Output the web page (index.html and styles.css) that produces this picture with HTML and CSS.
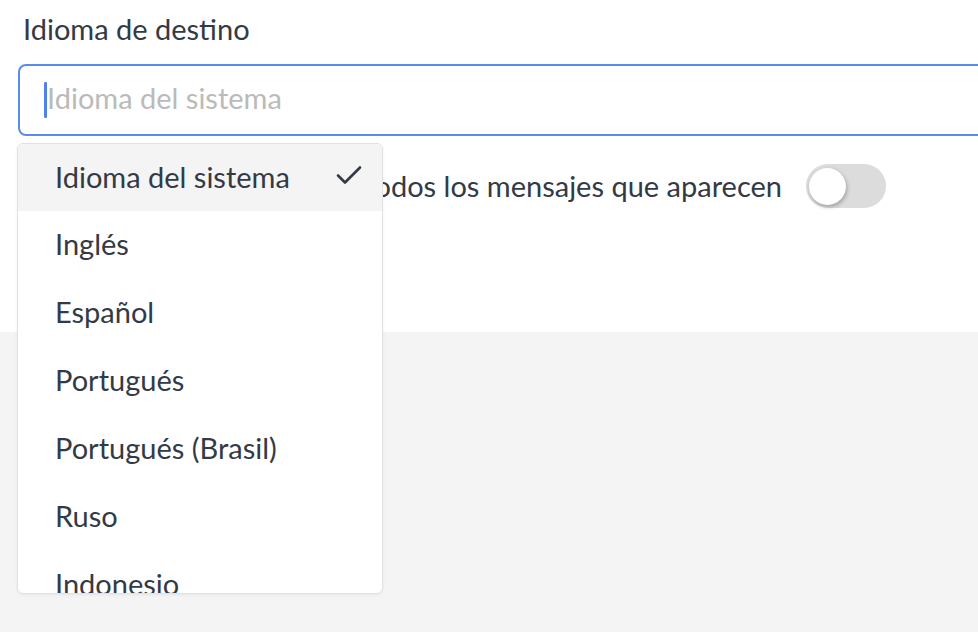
FILE: index.html
```html
<!DOCTYPE html>
<html lang="es">
<head>
<meta charset="utf-8">
<title>Idioma de destino</title>
<link rel="stylesheet" href="styles.css">
</head>
<body>
<div class="page">
  <section class="panel">
    <div class="field-label">Idioma de destino</div>
    <div class="select-input">
      <span class="caret"></span>
      <span class="placeholder">Idioma del sistema</span>
    </div>
    <div class="toggle-row">
      <span class="toggle-label">Traducir todos los mensajes que aparecen</span>
      <span class="toggle"><span class="knob"></span></span>
    </div>

    <ul class="dropdown">
      <li class="option selected">
        <span>Idioma del sistema</span>
        <svg class="check" width="26" height="20" viewBox="0 0 26 20"><path d="M2 10.5 L9 17.5 L24 2.5" fill="none" stroke="#333a45" stroke-width="2.6" stroke-linecap="round" stroke-linejoin="round"/></svg>
      </li>
      <li class="option">Inglés</li>
      <li class="option">Español</li>
      <li class="option">Portugués</li>
      <li class="option">Portugués (Brasil)</li>
      <li class="option">Ruso</li>
      <li class="option">Indonesio</li>
    </ul>
  </section>
  <section class="backdrop"></section>
</div>
</body>
</html>
```

FILE: styles.css
```css
* { box-sizing: border-box; }
html, body {
  margin: 0;
  padding: 0;
  background: #f4f4f4;
  font-family: Lato, "Noto Sans", sans-serif;
  color: #333a45;
  overflow: hidden;
}
.page {
  width: 978px;
  height: 632px;
  display: flex;
  flex-direction: column;
}
.panel {
  position: relative;
  background: #ffffff;
  height: 332px;
  padding: 11px 0 0 18px;
  overflow: visible;
  z-index: 1;
}
.field-label {
  font-size: 29px;
  line-height: 36px;
  padding-left: 5px;
}
.select-input {
  margin-top: 17px;
  width: 980px;
  height: 72px;
  border: 2px solid #5b8cec;
  border-radius: 8px;
  padding: 0 0 4px 24px;
  display: flex;
  align-items: center;
  font-size: 29px;
  line-height: 64px;
}
.caret {
  width: 3px;
  height: 36px;
  background: #4f82ee;
  border-radius: 1px;
  margin-top: 4px;
}
.placeholder {
  color: #bababa;
}
.toggle-row {
  margin-top: 27px;
  width: 868px;
  display: flex;
  justify-content: flex-end;
  align-items: center;
  gap: 24px;
  height: 45px;
}
.toggle-label {
  font-size: 29px;
  line-height: 36px;
  white-space: nowrap;
}
.toggle {
  position: relative;
  flex: none;
  width: 80px;
  height: 44px;
  border-radius: 22px;
  background: #dcdcdc;
}
.knob {
  position: absolute;
  left: 3px;
  top: 4px;
  width: 37px;
  height: 37px;
  border-radius: 50%;
  background: #ffffff;
  box-shadow: 1px 2px 4px rgba(0,0,0,0.28);
}
.dropdown {
  position: absolute;
  left: 17px;
  top: 143px;
  width: 366px;
  height: 451px;
  margin: 0;
  padding: 0;
  list-style: none;
  background: #ffffff;
  border: 1px solid #e2e2e2;
  border-radius: 6px;
  box-shadow: 0 1px 3px rgba(0,0,0,0.06);
  overflow: hidden;
}
.option {
  height: 68px;
  line-height: 66px;
  padding: 0 20px 2px 37px;
  font-size: 29px;
  white-space: nowrap;
  display: flex;
  align-items: center;
  justify-content: space-between;
}
.option.selected {
  background: #f4f4f4;
  height: 67px;
  padding-bottom: 1px;
}
.check {
  display: block;
  margin-top: -4px;
}
.backdrop {
  flex: 1;
  background: #f4f4f4;
}
```
